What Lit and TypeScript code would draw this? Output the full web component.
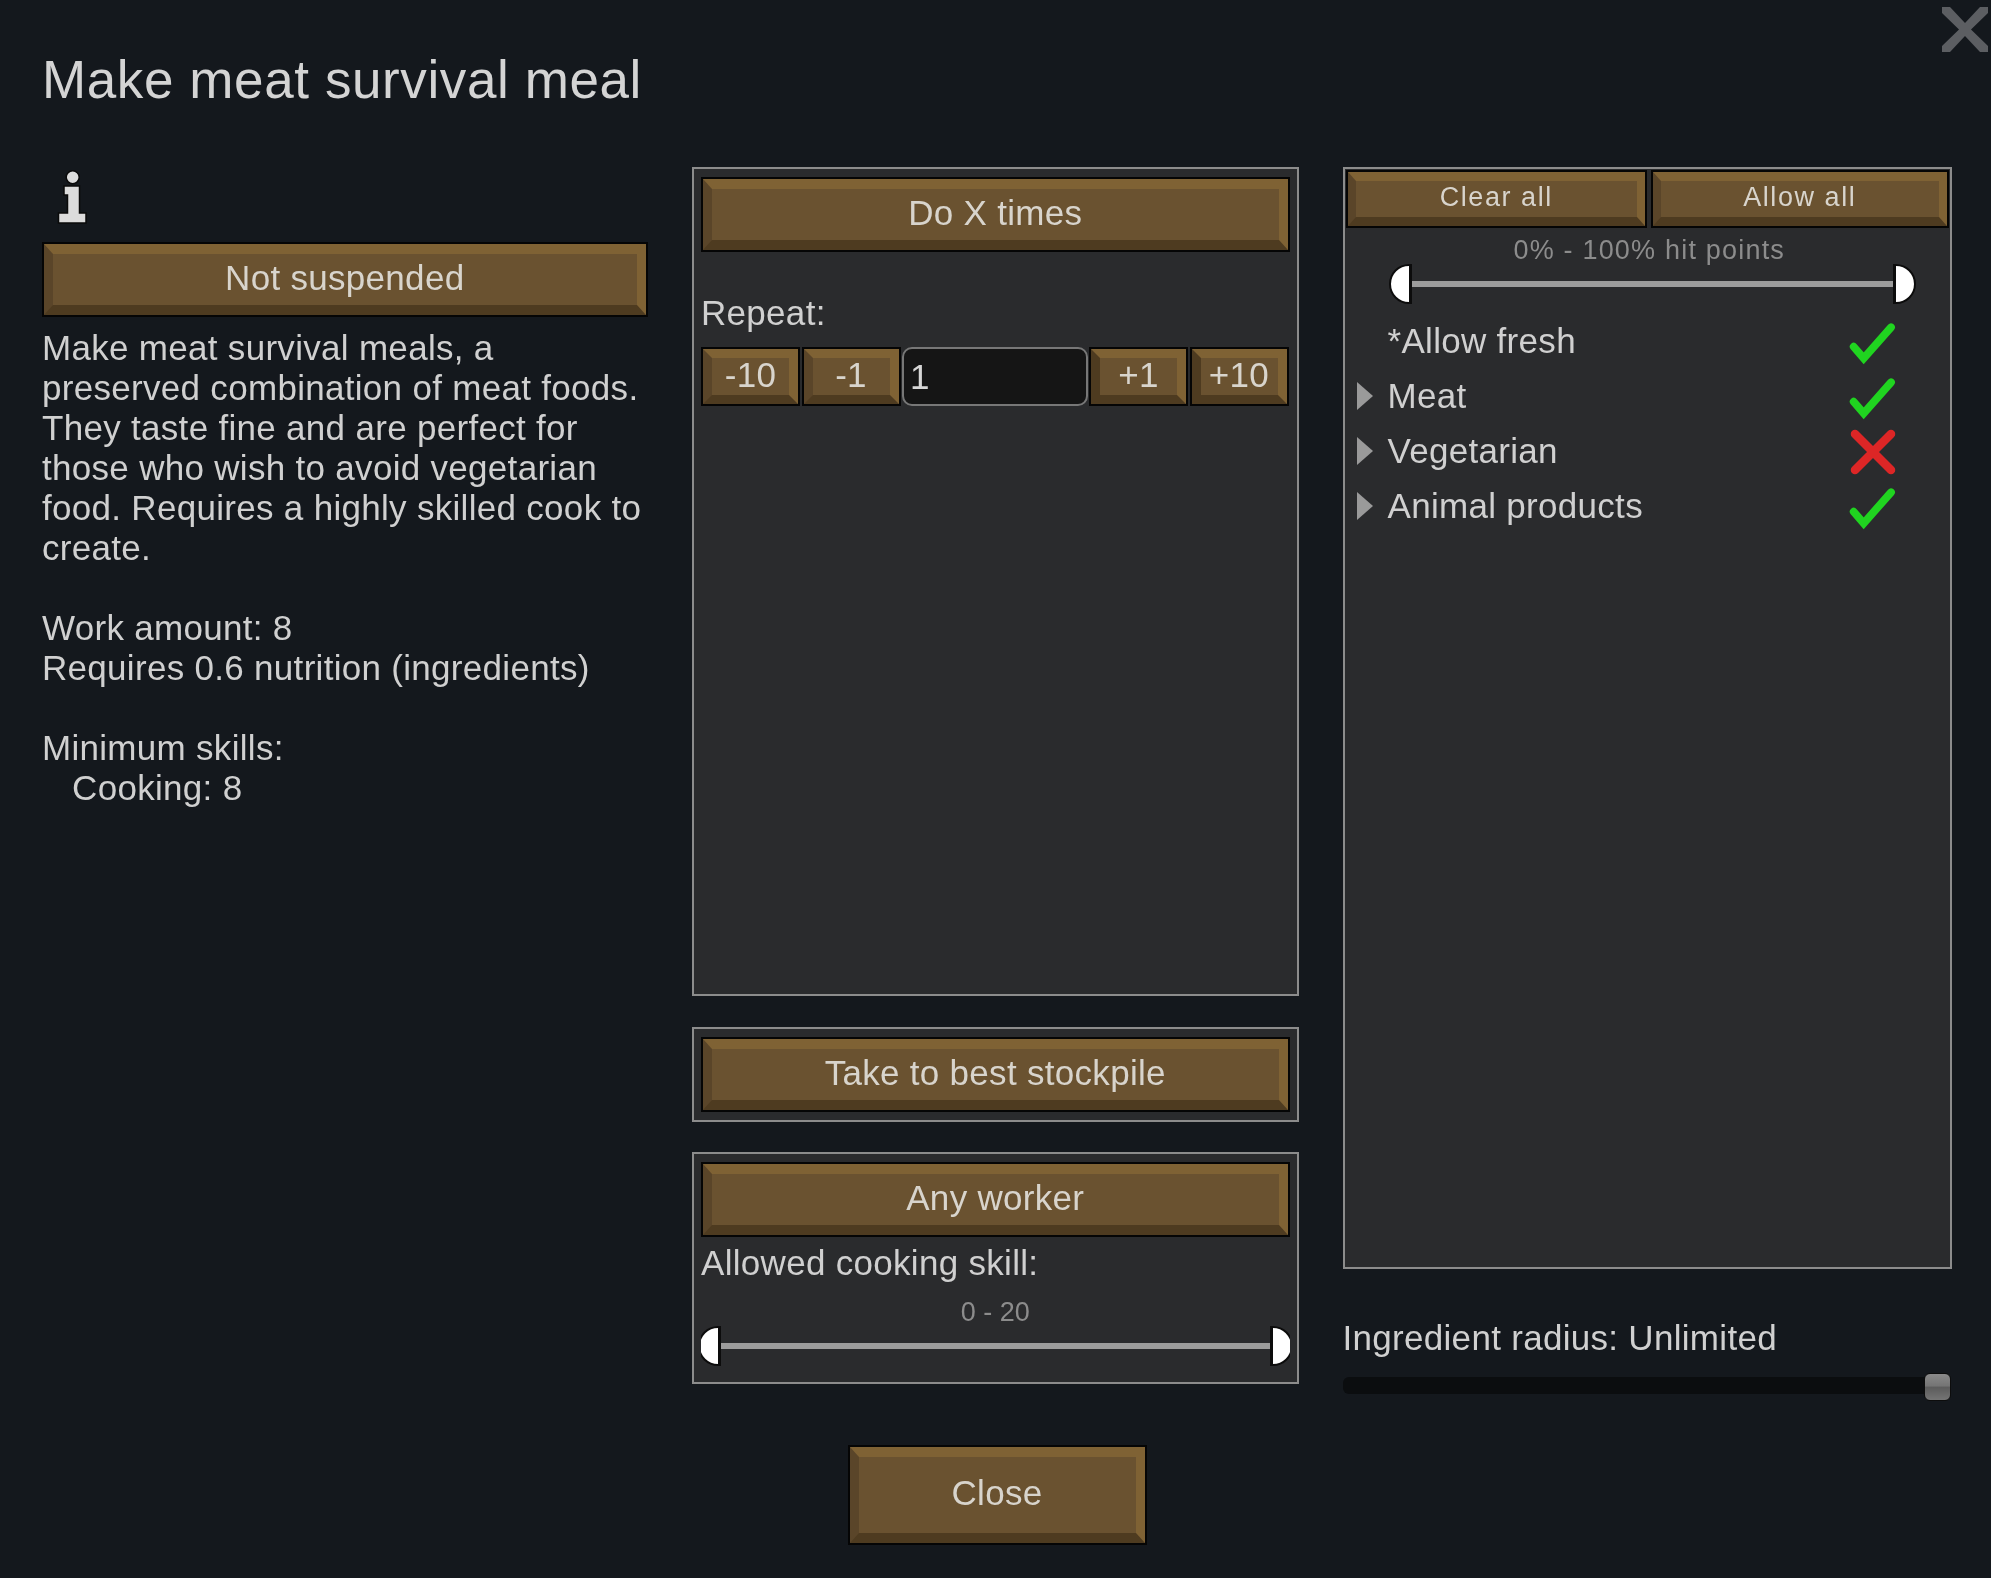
import { LitElement, html, css, svg } from "lit";
import { customElement } from "lit/decorators.js";

const check = svg`<svg class="mark" viewBox="0 0 48 48"><path d="M4.7 27.7 L14.7 39.3 L42 8.3" fill="none" stroke="#20d420" stroke-width="7.8" stroke-linecap="round" stroke-linejoin="miter"/></svg>`;
const cross = svg`<svg class="mark" viewBox="0 0 48 48"><path d="M6 5 L42 41 M42 5 L6 41" fill="none" stroke="#dd2626" stroke-width="8.5" stroke-linecap="round"/></svg>`;

@customElement("range-slider")
class RangeSlider extends LitElement {
  static properties = { clipped: { type: Boolean } };
  clipped = false;
  static styles = css`
    :host { display: block; height: 40px; overflow: hidden; }
    .in { display: flex; align-items: center; height: 40px; }
    .in.clipped { margin: 0 -3px; }
    .handle { width: 23px; height: 40px; box-sizing: border-box; background: #fff; border: 2.5px solid #0c0c0c; flex: none; }
    .l { border-radius: 20px 0 0 20px / 20px 0 0 20px; border-right-width: 3px; }
    .r { border-radius: 0 20px 20px 0 / 0 20px 20px 0; border-left-width: 3px; }
    .track { flex: 1; height: 6px; background: #9c9c9c; }
  `;
  render() {
    return html`<div class="in ${this.clipped ? "clipped" : ""}"><div class="handle l"></div><div class="track"></div><div class="handle r"></div></div>`;
  }
}

@customElement("app-root")
export class AppRoot extends LitElement {
  static styles = css`
    :host {
      display: block; width: 1991px; height: 1578px; position: relative; overflow: hidden;
      background: #14181d; color: #d0d0d0;
      font-family: "Liberation Sans", Arial, sans-serif; font-size: 35px; line-height: 40px; letter-spacing: 0.3px;
    }
    .close-x { position: absolute; left: 1942px; top: 7px; width: 46px; height: 45px; }
    .window { padding: 0 0 0 41.5px; display: flex; flex-direction: column; filter: blur(0.55px); }
    h1 { margin: 0; height: 167px; box-sizing: border-box; padding: 51px 0 0 0.5px; font-size: 53px; line-height: 58px; font-weight: 400; letter-spacing: 0.6px; color: #d4d4d4; }
    .cols { display: grid; grid-template-columns: 606.5px 606.5px 609.5px; column-gap: 44px; align-items: start; }
    .col { display: flex; flex-direction: column; }
    .btn { box-sizing: border-box; padding: 2px; height: 75px; background: #050505; color: #d8d4cc; }
    .bevel {
      box-sizing: border-box; width: 100%; height: 100%; display: flex; align-items: center; justify-content: center;
      border-style: solid; border-width: 10px 9px; padding-bottom: 2.5px;
      border-color: #7f6234 #7f6234 #4e3b20 #5a4529; background: #6a5230;
    }
    .info { height: 75px; box-sizing: border-box; padding-left: 13.5px; }
    .info svg { width: 35px; height: 60px; display: block; }
    .desc { margin: 11px 0 0 0.5px; white-space: pre; }
    .panel { box-sizing: border-box; border: 2.5px solid #8c8c8c; background: #2a2b2d; }
    .orders { height: 829px; padding: 7.5px 7px; }
    .stock { height: 95px; padding: 7.5px 7px; margin-top: 31px; }
    .worker { height: 232px; padding: 7.5px 7px; margin-top: 30px; }
    .repeat { margin-top: 41px; height: 40px; }
    .stepper { display: grid; grid-template-columns: 99px 99px 185.5px 99px 99px; column-gap: 1.5px; height: 59px; margin-top: 14.5px; }
    .stepper .btn { height: 59px; }
    .stepper .bevel { border-width: 9px; }
    .stepper .right .bevel { border-color: #7f6234 #7f6234 #4e3b20 #4e3b20; }
    .input {
      box-sizing: border-box; border: 2.5px solid #777; border-radius: 10px; background: #151515; color: #d6d6d6;
      padding: 8px 0 0 6px;
    }
    .allowed { margin-top: 8.5px; height: 40px; line-height: 36px; }
    .range-label { font-size: 27px; line-height: 30px; color: #8c8c8c; text-align: center; letter-spacing: 0.9px; }
    .worker .range-label { margin-top: 12px; letter-spacing: 0; }
    .worker range-slider { margin-top: -1px; }
    .filter { height: 1102px; padding: 0.5px 1px; }
    .filter-btns { display: grid; grid-template-columns: 301.5px 298.5px; column-gap: 3.5px; }
    .filter-btns .btn { height: 58px; }
    .filter-btns .bevel { border-width: 9px 8px; }
    .tiny { font-size: 27px; letter-spacing: 1.55px; }
    .filter .range-label { margin-top: 7px; letter-spacing: 1.2px; padding-left: 4px; }
    .filter range-slider { margin: -1px 33.5px 0 43px; }
    .rows { margin-top: 10px; display: flex; flex-direction: column; }
    .row { display: flex; align-items: center; height: 55px; padding-left: 11px; }
    .arrow { width: 16px; height: 28px; flex: none; margin-right: 15px; }
    .arrow svg { display: block; width: 16px; height: 28px; }
    .row .label { flex: 1; padding-bottom: 1px; }
    .mark { display: block; width: 48px; height: 48px; margin: 4px 52.5px 0 0; flex: none; }
    .radius-label { margin-top: 49px; height: 40px; line-height: 40px; }
    .radius { position: relative; height: 28px; margin-top: 15px; }
    .radius .track { position: absolute; left: 0; right: 2px; top: 4px; height: 17px; background: #0b0d0f; border-radius: 6px; }
    .radius .knob { position: absolute; right: 1.5px; top: 0; width: 27px; height: 28px; border-radius: 6px; background: linear-gradient(#8a8a8a, #757575 45%, #5c5c5c 52%, #757575); border: 1.5px solid #0d0d0d; box-sizing: border-box; }
    .footer { width: 299px; margin: 43.5px 0 0 806px; }
    .footer .btn { width: 299px; height: 100px; }
  `;

  private btn(label: string, cls = "") {
    return html`<div class="btn ${cls}"><div class="bevel">${label}</div></div>`;
  }

  private row(label: string, arrow: boolean, mark: unknown) {
    return html`<div class="row">
      <div class="arrow">${arrow ? svg`<svg viewBox="0 0 16 28"><path d="M0 0 L16 14 L0 28 Z" fill="#9a9a9a"/></svg>` : ""}</div>
      <div class="label">${label}</div>
      ${mark}
    </div>`;
  }

  render() {
    return html`
      <svg class="close-x" viewBox="0 0 46 45"><path d="M0 0 H8 L23 16 L38 0 H46 V6 L29 22.5 L46 39 V45 H38 L23 29 L8 45 H0 V39 L17 22.5 L0 6 Z" fill="#5c5e62"/></svg>
      <div class="window">
        <h1>Make meat survival meal</h1>
        <div class="cols">
          <div class="col">
            <div class="info">
              <svg viewBox="15 7 35 60"><circle cx="32.7" cy="17.3" r="6.5" fill="#dcdcdc" stroke="#0a0a0a" stroke-width="1.5"/><path d="M24 26 H39.5 V53 H46 V63 H18.5 V53 H27.5 V35 H24 Z" fill="#dcdcdc" stroke="#0a0a0a" stroke-width="1.5"/></svg>
            </div>
            ${this.btn("Not suspended")}
            <div class="desc">Make meat survival meals, a
preserved combination of meat foods.
They taste fine and are perfect for
those who wish to avoid vegetarian
food. Requires a highly skilled cook to
create.

Work amount: 8
Requires 0.6 nutrition (ingredients)

Minimum skills:
&nbsp;&nbsp;&nbsp;Cooking: 8</div>
          </div>
          <div class="col">
            <div class="panel orders">
              ${this.btn("Do X times")}
              <div class="repeat">Repeat:</div>
              <div class="stepper">
                ${this.btn("-10")}${this.btn("-1")}
                <div class="input">1</div>
                ${this.btn("+1", "right")}${this.btn("+10", "right")}
              </div>
            </div>
            <div class="panel stock">${this.btn("Take to best stockpile")}</div>
            <div class="panel worker">
              ${this.btn("Any worker")}
              <div class="allowed">Allowed cooking skill:</div>
              <div class="range-label">0 - 20</div>
              <range-slider clipped></range-slider>
            </div>
          </div>
          <div class="col">
            <div class="panel filter">
              <div class="filter-btns tiny">${this.btn("Clear all")}${this.btn("Allow all")}</div>
              <div class="range-label">0% - 100% hit points</div>
              <range-slider></range-slider>
              <div class="rows">
                ${this.row("*Allow fresh", false, check)}
                ${this.row("Meat", true, check)}
                ${this.row("Vegetarian", true, cross)}
                ${this.row("Animal products", true, check)}
              </div>
            </div>
            <div class="radius-label">Ingredient radius: Unlimited</div>
            <div class="radius"><div class="track"></div><div class="knob"></div></div>
          </div>
        </div>
        <div class="footer">${this.btn("Close")}</div>
      </div>
    `;
  }
}
